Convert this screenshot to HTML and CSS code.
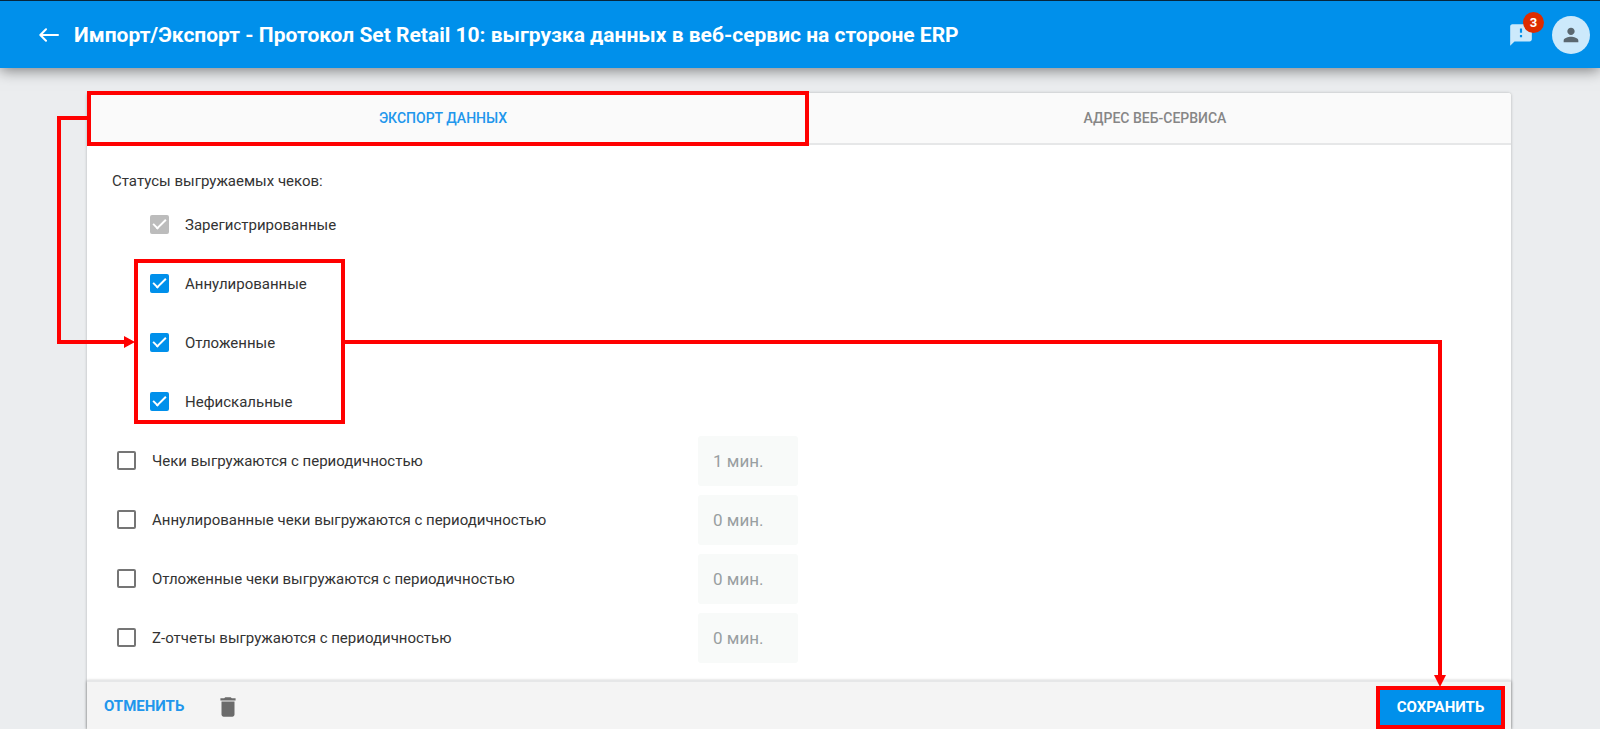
FILE: index.html
```html
<!DOCTYPE html>
<html lang="ru">
<head>
<meta charset="utf-8">
<meta name="viewport" content="width=device-width, initial-scale=1">
<title>Импорт/Экспорт - Протокол Set Retail 10</title>
<link rel="stylesheet" href="styles.css">
</head>
<body>
<header class="topbar">
  <button class="icon-button" type="button" aria-label="Назад">
    <svg width="20" height="14" viewBox="0 0 20 14" fill="none" stroke="currentColor" stroke-width="2" stroke-linecap="round" stroke-linejoin="round"><path d="M19 7H1.500M7 1.300L1.300 7L7 12.700"/></svg>
  </button>
  <h1 class="title">Импорт/Экспорт - Протокол Set Retail 10: выгрузка данных в веб-сервис на стороне ERP</h1>
  <button class="icon-button messages" type="button" aria-label="Сообщения">
    <svg width="26" height="26" viewBox="0 0 24 24" fill="currentColor"><path d="M20 2H4c-1.100 0-1.990.9-1.990 2L2 22l4-4h14c1.100 0 2-.9 2-2V4c0-1.100-.9-2-2-2zm-7 12h-2v-2h2v2zm0-4h-2V6h2v4z"/></svg>
    <span class="badge">3</span>
  </button>
  <button class="icon-button avatar" type="button" aria-label="Профиль">
    <svg width="22" height="22" viewBox="0 0 24 24" fill="currentColor"><path d="M12 12c2.210 0 4-1.790 4-4s-1.790-4-4-4-4 1.790-4 4 1.790 4 4 4zm0 2c-2.670 0-8 1.340-8 4v2h16v-2c0-2.660-5.330-4-8-4z"/></svg>
  </button>
</header>

<main class="page">
  <form class="card">
    <nav class="tabs">
      <button class="tab tab-active" type="button">Экспорт данных<span class="frame frame-tab"></span></button>
      <button class="tab" type="button">Адрес веб-сервиса</button>
    </nav>

    <div class="content">
      <h2 class="heading">Статусы выгружаемых чеков:</h2>
      <div class="row row-nested">
        <label class="check"><input type="checkbox" checked disabled>Зарегистрированные</label>
      </div>
      <div class="group">
        <div class="row row-nested">
          <label class="check"><input type="checkbox" checked>Аннулированные</label>
        </div>
        <div class="row row-nested">
          <label class="check"><input type="checkbox" checked>Отложенные</label>
        </div>
        <div class="row row-nested">
          <label class="check"><input type="checkbox" checked>Нефискальные</label>
        </div>
        <span class="frame frame-group"></span>
      </div>
      <div class="row">
        <label class="check"><input type="checkbox">Чеки выгружаются с периодичностью</label>
        <input class="period" type="text" value="1 мин." aria-label="Период выгрузки чеков" disabled>
      </div>
      <div class="row">
        <label class="check"><input type="checkbox">Аннулированные чеки выгружаются с периодичностью</label>
        <input class="period" type="text" value="0 мин." aria-label="Период выгрузки аннулированных чеков" disabled>
      </div>
      <div class="row">
        <label class="check"><input type="checkbox">Отложенные чеки выгружаются с периодичностью</label>
        <input class="period" type="text" value="0 мин." aria-label="Период выгрузки отложенных чеков" disabled>
      </div>
      <div class="row">
        <label class="check"><input type="checkbox">Z-отчеты выгружаются с периодичностью</label>
        <input class="period" type="text" value="0 мин." aria-label="Период выгрузки Z-отчетов" disabled>
      </div>
    </div>

    <footer class="actions">
      <button class="cancel" type="button">Отменить</button>
      <button class="icon-button delete" type="button" aria-label="Удалить">
        <svg width="26" height="26" viewBox="0 0 24 24" fill="currentColor"><path d="M6 19c0 1.100.9 2 2 2h8c1.100 0 2-.9 2-2V7H6v12zM19 4h-3.500l-1-1h-5l-1 1H5v2h14V4z"/></svg>
      </button>
      <button class="save" type="button">Сохранить</button>
    </footer>

    <span class="link link-in"></span>
    <span class="link link-out"></span>
  </form>
</main>
</body>
</html>
```

FILE: styles.css
```css
*,
*::before,
*::after {
  box-sizing: border-box;
}

body {
  margin: 0;
  min-height: 100vh;
  display: flex;
  flex-direction: column;
  background: #ebedef;
  color: #333;
  font-family: Roboto, sans-serif;
  font-size: 15px;
}

button,
input {
  margin: 0;
  font-family: inherit;
}

button {
  padding: 0;
  border: 0;
  background: none;
  cursor: pointer;
}

.topbar {
  position: relative;
  display: flex;
  align-items: center;
  height: 68px;
  padding: 0 10px 0 39px;
  border-top: 1px solid #06263d;
  background: #0090eb;
  color: #fff;
  box-shadow: 0 2px 14px rgba(0, 0, 0, 0.5);
}

.icon-button {
  display: flex;
  align-items: center;
  justify-content: center;
  color: inherit;
}

.title {
  flex: 1;
  margin: 0 0 0 15px;
  font-size: 21px;
  font-weight: 700;
  line-height: 28px;
}

.messages {
  position: relative;
  margin-right: 18px;
  color: #cce9fb;
}

.badge {
  position: absolute;
  top: -10px;
  right: -10px;
  width: 21px;
  height: 21px;
  border-radius: 50%;
  background: #dd2c00;
  color: #fff;
  font-size: 13px;
  font-weight: 700;
  line-height: 21px;
  text-align: center;
}

.avatar {
  width: 38px;
  height: 38px;
  border-radius: 50%;
  background: #cce9fb;
  color: #5b6870;
}

.page {
  flex: 1;
  display: flex;
  flex-direction: column;
  padding: 25px 89px 0 87px;
}

.card {
  position: relative;
  flex: 1;
  display: flex;
  flex-direction: column;
  border-radius: 3px 3px 0 0;
  background: #fff;
  box-shadow: 0 0 3px rgba(0, 0, 0, 0.25);
}

.tabs {
  display: grid;
  grid-template-columns: 1fr 1fr;
  height: 52px;
  border-bottom: 2px solid #e6e7e8;
  border-radius: 3px 3px 0 0;
  background: #fafafa;
}

.tab {
  position: relative;
  color: #868686;
  font-size: 14px;
  font-weight: 500;
  text-transform: uppercase;
}

.tab-active {
  color: #2196ec;
}

.content {
  flex: 1;
  padding: 24px 25px 12px;
}

.heading {
  margin: 0 0 2px;
  font-size: 15px;
  font-weight: 400;
  line-height: 24px;
}

.row {
  display: grid;
  grid-template-columns: minmax(0, 581px) 100px;
  align-items: center;
  height: 59px;
  padding-left: 5px;
}

.row-nested {
  padding-left: 38px;
}

.check {
  display: flex;
  align-items: center;
  gap: 16px;
}

.check input {
  appearance: none;
  position: relative;
  flex: none;
  width: 19px;
  height: 19px;
  border: 2px solid #757575;
  border-radius: 2px;
}

.check input:checked {
  border-color: #0090eb;
  background: #0090eb;
}

.check input:checked:disabled {
  border-color: #bcbcbc;
  background: #bcbcbc;
}

.check input:checked::before {
  content: "";
  position: absolute;
  left: 4px;
  top: -1px;
  width: 7px;
  height: 13px;
  border: solid #fff;
  border-width: 0 2px 2px 0;
  transform: rotate(45deg);
}

.period {
  width: 100px;
  height: 50px;
  padding: 0 15px;
  border: 0;
  border-radius: 3px;
  background: #f8faf9;
  color: #999fa1;
  font-size: 17px;
}

.actions {
  display: flex;
  align-items: center;
  height: 49px;
  padding: 0 10px 0 17px;
  border-top: 2px solid #e6e7e8;
  background: #f4f4f4;
  box-shadow: 0 1px 3px rgba(0, 0, 0, 0.4);
}

.cancel {
  color: #2196ec;
  font-size: 15px;
  font-weight: 700;
  text-transform: uppercase;
}

.delete {
  margin-left: 31px;
  padding-top: 2px;
  color: #6b6b6b;
}

.save {
  width: 121px;
  height: 35px;
  margin: 4px 0 0 auto;
  padding-bottom: 2px;
  outline: 4px solid #f00;
  background: #0090eb;
  color: #fff;
  font-size: 15px;
  font-weight: 700;
  text-transform: uppercase;
}

.group {
  position: relative;
}

.frame {
  position: absolute;
  border: 4px solid #f00;
  pointer-events: none;
}

.frame-tab {
  inset: -2px -10px -3px 0;
}

.frame-group {
  top: 5px;
  bottom: 7px;
  left: 22px;
  width: 211px;
}

.link {
  position: absolute;
  border: 0 solid #f00;
  pointer-events: none;
}

.link::after {
  content: "";
  position: absolute;
  background: #f00;
}

.link-in {
  top: 23px;
  left: -30px;
  width: 30px;
  height: 228px;
  border-width: 4px 0 4px 4px;
}

.link-in::after {
  top: 216px;
  left: 0;
  width: 74px;
  height: 12px;
  clip-path: polygon(0 4px, 63px 4px, 63px 0, 100% 50%, 63px 100%, 63px 8px, 0 8px);
}

.link-out {
  top: 247px;
  right: 69px;
  bottom: 53px;
  left: 258px;
  border-width: 4px 4px 0 0;
}

.link-out::after {
  right: -8px;
  bottom: -11px;
  width: 12px;
  height: 12px;
  clip-path: polygon(0 0, 100% 0, 50% 100%);
}
```
